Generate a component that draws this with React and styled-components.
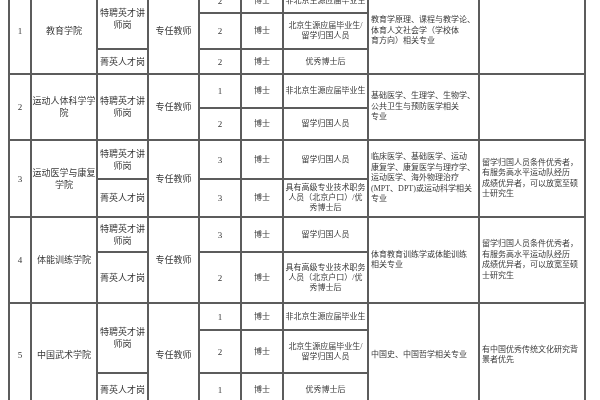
import React from 'react';
import styled, { createGlobalStyle } from 'styled-components';

const Global = createGlobalStyle`
  html, body { margin: 0; padding: 0; background: #fff; }
  body { width: 600px; height: 400px; overflow: hidden; }
`;

const Page = styled.div`
  width: 600px;
  height: 400px;
  overflow: hidden;
  background: #fff;
  padding-left: 8px;
  box-sizing: border-box;
  filter: blur(0.4px);
`;

const Sheet = styled.table`
  border-collapse: collapse;
  table-layout: fixed;
  width: 578px;
  margin-top: -13px;
  font-family: "Liberation Serif", "Noto Sans CJK SC", serif;
  color: #383838;
`;

const Row = styled.tr`
  height: ${(p) => p.$h}px;
`;

const Cell = styled.td`
  border: 2px solid #5c5c5c;
  padding: 0;
  text-align: center;
  vertical-align: middle;
  font-size: 9px;
  line-height: 12px;
`;

const InfoCell = styled(Cell)`
  padding: 0 1px;
  font-size: 8px;
  line-height: 10px;
  white-space: nowrap;
`;

const NoteCell = styled(Cell)`
  text-align: left;
  padding: 0 2px;
  font-size: 8px;
  line-height: 10.5px;
  white-space: nowrap;
`;

const cols = [22, 66, 51, 51, 42, 42, 85, 111, 106];

const Lines = ({ text }) =>
  text.split('\n').map((t, i, a) => (
    <React.Fragment key={i}>
      {t}
      {i < a.length - 1 && <br />}
    </React.Fragment>
  ));

const NOTE_A = '留学归国人员条件优秀者，\n有服务高水平运动队经历\n成绩优异者，可以放宽至硕\n士研究生';
const SENIOR = '具有高级专业技术职务\n人员（北京户口）/优\n秀博士后';
const LOCAL = '北京生源应届毕业生/\n留学归国人员';

export default function App() {
  return (
    <>
      <Global />
      <Page>
        <Sheet>
          <colgroup>
            {cols.map((w, i) => (
              <col key={i} style={{ width: w }} />
            ))}
          </colgroup>
          <tbody>
            <Row $h={25}>
              <Cell rowSpan={3}>1</Cell>
              <Cell rowSpan={3}>教育学院</Cell>
              <Cell rowSpan={2}>特聘英才讲师岗</Cell>
              <Cell rowSpan={3}>专任教师</Cell>
              <Cell>2</Cell>
              <InfoCell>博士</InfoCell>
              <InfoCell>非北京生源应届毕业生</InfoCell>
              <NoteCell rowSpan={3}>
                <Lines text={'教育学原理、课程与教学论、\n体育人文社会学（学校体\n育方向）相关专业'} />
              </NoteCell>
              <NoteCell rowSpan={3} />
            </Row>
            <Row $h={36}>
              <Cell>2</Cell>
              <InfoCell>博士</InfoCell>
              <InfoCell><Lines text={LOCAL} /></InfoCell>
            </Row>
            <Row $h={25}>
              <Cell>菁英人才岗</Cell>
              <Cell>2</Cell>
              <InfoCell>博士</InfoCell>
              <InfoCell>优秀博士后</InfoCell>
            </Row>

            <Row $h={34}>
              <Cell rowSpan={2}>2</Cell>
              <Cell rowSpan={2}>运动人体科学学院</Cell>
              <Cell rowSpan={2}>特聘英才讲师岗</Cell>
              <Cell rowSpan={2}>专任教师</Cell>
              <Cell>1</Cell>
              <InfoCell>博士</InfoCell>
              <InfoCell>非北京生源应届毕业生</InfoCell>
              <NoteCell rowSpan={2}>
                <Lines text={'基础医学、生理学、生物学、\n公共卫生与预防医学相关\n专业'} />
              </NoteCell>
              <NoteCell rowSpan={2} />
            </Row>
            <Row $h={32}>
              <Cell>2</Cell>
              <InfoCell>博士</InfoCell>
              <InfoCell>留学归国人员</InfoCell>
            </Row>

            <Row $h={39}>
              <Cell rowSpan={2}>3</Cell>
              <Cell rowSpan={2}>运动医学与康复学院</Cell>
              <Cell>特聘英才讲师岗</Cell>
              <Cell rowSpan={2}>专任教师</Cell>
              <Cell>3</Cell>
              <InfoCell>博士</InfoCell>
              <InfoCell>留学归国人员</InfoCell>
              <NoteCell rowSpan={2}>
                <Lines
                  text={'临床医学、基础医学、运动\n康复学、康复医学与理疗学、\n运动医学、海外物理治疗\n(MPT、DPT)或运动科学相关\n专业'}
                />
              </NoteCell>
              <NoteCell rowSpan={2}>
                <Lines text={NOTE_A} />
              </NoteCell>
            </Row>
            <Row $h={38}>
              <Cell>菁英人才岗</Cell>
              <Cell>3</Cell>
              <InfoCell>博士</InfoCell>
              <InfoCell><Lines text={SENIOR} /></InfoCell>
            </Row>

            <Row $h={35}>
              <Cell rowSpan={2}>4</Cell>
              <Cell rowSpan={2}>体能训练学院</Cell>
              <Cell>特聘英才讲师岗</Cell>
              <Cell rowSpan={2}>专任教师</Cell>
              <Cell>3</Cell>
              <InfoCell>博士</InfoCell>
              <InfoCell>留学归国人员</InfoCell>
              <NoteCell rowSpan={2}>
                <Lines text={'体育教育训练学或体能训练\n相关专业'} />
              </NoteCell>
              <NoteCell rowSpan={2}>
                <Lines text={NOTE_A} />
              </NoteCell>
            </Row>
            <Row $h={51}>
              <Cell>菁英人才岗</Cell>
              <Cell>2</Cell>
              <InfoCell>博士</InfoCell>
              <InfoCell><Lines text={SENIOR} /></InfoCell>
            </Row>

            <Row $h={27}>
              <Cell rowSpan={3}>5</Cell>
              <Cell rowSpan={3}>中国武术学院</Cell>
              <Cell rowSpan={2}>特聘英才讲师岗</Cell>
              <Cell rowSpan={3}>专任教师</Cell>
              <Cell>1</Cell>
              <InfoCell>博士</InfoCell>
              <InfoCell>非北京生源应届毕业生</InfoCell>
              <NoteCell rowSpan={3}>中国史、中国哲学相关专业</NoteCell>
              <NoteCell rowSpan={3}>
                <Lines text={'有中国优秀传统文化研究背\n景者优先'} />
              </NoteCell>
            </Row>
            <Row $h={43}>
              <Cell>2</Cell>
              <InfoCell>博士</InfoCell>
              <InfoCell><Lines text={LOCAL} /></InfoCell>
            </Row>
            <Row $h={34}>
              <Cell>菁英人才岗</Cell>
              <Cell>1</Cell>
              <InfoCell>博士</InfoCell>
              <InfoCell>优秀博士后</InfoCell>
            </Row>
          </tbody>
        </Sheet>
      </Page>
    </>
  );
}
